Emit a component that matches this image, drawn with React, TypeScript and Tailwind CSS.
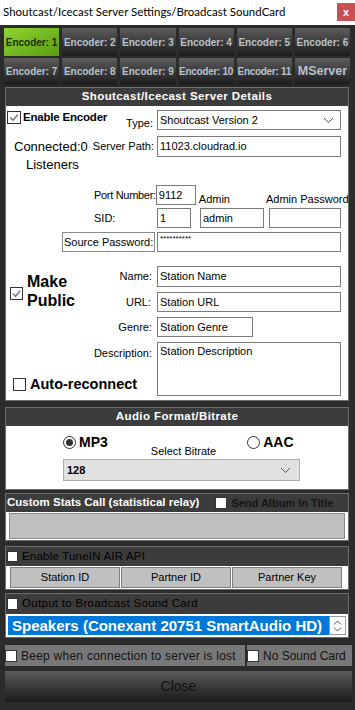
import React, { ReactNode } from 'react';

const Check = ({ checked = false, className = '' }: { checked?: boolean; className?: string }) => (
  <div className={`bg-white border border-[#333] flex items-center justify-center shrink-0 ${className}`}>
    {checked && (
      <svg viewBox="0 0 12 12" className="w-full h-full">
        <polyline points="2,6 5,9 10,3" fill="none" stroke="#6b6b6b" strokeWidth="1.3" />
      </svg>
    )}
  </div>
);

const Radio = ({ checked = false }: { checked?: boolean }) => (
  <div className="w-[13px] h-[13px] rounded-full border border-[#333] bg-white flex items-center justify-center shrink-0">
    {checked && <div className="w-[7px] h-[7px] rounded-full bg-[#333]" />}
  </div>
);

const Chevron = () => (
  <svg width="11" height="7" viewBox="0 0 11 7">
    <polyline points="1,1 5.5,5.5 10,1" fill="none" stroke="#555" strokeWidth="1" />
  </svg>
);

const Field = ({ value = '', className = '' }: { value?: string; className?: string }) => (
  <div className={`border border-[#7a7a7a] bg-white text-[11px] text-black leading-[18px] pl-[2px] shrink-0 overflow-hidden whitespace-nowrap ${className}`}>
    {value}
  </div>
);

const Label = ({ children, className = '' }: { children: ReactNode; className?: string }) => (
  <div className={`text-[11px] text-black whitespace-nowrap ${className}`}>{children}</div>
);

interface SectionProps {
  title: ReactNode;
  children: ReactNode;
  headerClass?: string;
  className?: string;
}

const Section = ({ title, children, headerClass = 'h-[18px] justify-center', className = '' }: SectionProps) => (
  <div className={`w-[344px] border border-[#6e6e6e] ${className}`}>
    <div className={`bg-[#3c3c3c] flex items-center ${headerClass}`}>{title}</div>
    {children}
  </div>
);

const encoders = [
  'Encoder: 1', 'Encoder: 2', 'Encoder: 3', 'Encoder: 4', 'Encoder: 5', 'Encoder: 6',
  'Encoder: 7', 'Encoder: 8', 'Encoder: 9', 'Encoder: 10', 'Encoder: 11', 'MServer',
];

export default function App() {
  return (
    <div className="w-[355px] h-[710px] bg-[#2b2b2b] overflow-hidden font-['Liberation_Sans',Arial,sans-serif]">
      {/* Title bar */}
      <div className="h-[25px] bg-white flex items-start justify-between">
        <div className="pl-[3px] pt-[4px] text-[11.5px] text-black font-['Lato','Liberation_Sans',sans-serif] leading-[16px] whitespace-nowrap">
          Shoutcast/Icecast Server Settings/Broadcast SoundCard
        </div>
        <div className="mt-[3px] w-[18px] h-[18px] bg-[#c75050] text-white text-[11px] font-bold flex items-center justify-center leading-none">
          x
        </div>
      </div>

      <div className="pl-[5px] pt-[3px]">
        {/* Encoder tabs */}
        <div className="-ml-[1px] w-[346px] grid grid-cols-6 gap-x-[3px] gap-y-[2px]">
          {encoders.map((e, i) => (
            <div
              key={e}
              className={`${i < 6 ? 'h-[28px]' : 'h-[27px]'} flex items-center justify-center font-bold whitespace-nowrap ${
                i === 0
                  ? 'bg-gradient-to-br from-[#8fd430] to-[#5b9d12] text-[#1d2a0a]'
                  : 'bg-gradient-to-b from-[#5d5d5d] via-[#3b3b3b] to-[#1d1d1d] text-[#b7c2cb]'
              } ${i === 11 ? 'text-[12.5px]' : i > 8 ? 'text-[10px] tracking-[-0.3px]' : 'text-[10px]'}`}
            >
              {e}
            </div>
          ))}
        </div>

        {/* Server details */}
        <Section
          className="mt-[2px]"
          title={<span className="text-white font-bold text-[11.5px] tracking-[0.4px]">Shoutcast/Icecast Server Details</span>}
        >
          <div className="bg-white h-[294px] pt-[4px]">
            {/* Type */}
            <div className="flex h-[20px]">
              <div className="w-[151px] flex justify-between">
                <div className="flex items-start pl-[1px] pt-[1px]">
                  <Check checked className="w-[14px] h-[13px]" />
                  <span className="ml-[2px] text-[11.5px] font-bold text-black leading-[12px] tracking-[-0.2px]">Enable Encoder</span>
                </div>
                <Label className="self-end pr-[4px] leading-[14px]">Type:</Label>
              </div>
              <div className="w-[184px] h-[20px] border border-[#7a7a7a] flex items-center justify-between pl-[2px] pr-[6px]">
                <span className="text-[11px] text-black">Shoutcast Version 2</span>
                <Chevron />
              </div>
            </div>

            {/* Server path */}
            <div className="flex h-[21px] mt-[6px]">
              <div className="w-[151px] flex justify-between items-center">
                <span className="ml-[8px] text-[13px] text-black leading-[16px]">Connected:0</span>
                <Label className="pr-[3px]">Server Path:</Label>
              </div>
              <Field value="11023.cloudrad.io" className="w-[184px] h-[21px]" />
            </div>
            <div className="h-[16px] ml-[20px] text-[13px] text-black leading-[16px]">Listeners</div>

            {/* Port */}
            <div className="flex h-[20px] mt-[12px]">
              <div className="w-[151px] flex items-center">
                <Label className="ml-[88px] tracking-[-0.3px]">Port Number:</Label>
              </div>
              <Field value="9112" className="w-[40px] h-[20px]" />
              <Label className="self-end ml-[3px] leading-[12px] text-[#1b2a6e]">Admin</Label>
              <Label className="self-end ml-[36px] leading-[12px] text-[#1b2a6e]">Admin Password</Label>
            </div>

            {/* SID */}
            <div className="flex h-[20px] mt-[3px]">
              <div className="w-[151px] flex items-center">
                <Label className="ml-[88px]">SID:</Label>
              </div>
              <Field value="1" className="w-[34px] h-[20px]" />
              <Field value="admin" className="w-[64px] h-[20px] ml-[9px]" />
              <Field className="w-[72px] h-[20px] ml-[5px]" />
            </div>

            {/* Source password */}
            <div className="flex h-[20px] mt-[4px]">
              <div className="w-[151px] flex">
                <div className="ml-[56px] w-[93px] h-[20px] border border-[#8a8a8a] flex items-center pl-[1px]">
                  <Label>Source Password:</Label>
                </div>
              </div>
              <div className="w-[184px] h-[20px] border border-[#7a7a7a] pl-[2px] text-[8px] text-black leading-[12px]">
                **********
              </div>
            </div>

            {/* Public info */}
            <div className="grid grid-cols-[151px_auto] grid-rows-[21px_20px_20px_54px] gap-y-[5px] mt-[14px]">
              <div className="col-start-1 row-start-1 row-span-3 self-start mt-[6px] flex items-center">
                <Check checked className="ml-[4px] w-[13px] h-[13px] mt-[4px]" />
                <div className="ml-[4px] text-[16px] font-bold text-black leading-[19px]">
                  Make
                  <br />
                  Public
                </div>
              </div>
              <Label className="col-start-1 row-start-1 justify-self-end self-center pr-[5px]">Name:</Label>
              <Field value="Station Name" className="col-start-2 row-start-1 w-[184px] h-[21px]" />
              <Label className="col-start-1 row-start-2 justify-self-end self-center pr-[6px]">URL:</Label>
              <Field value="Station URL" className="col-start-2 row-start-2 w-[184px] h-[20px]" />
              <Label className="col-start-1 row-start-3 justify-self-end self-center pr-[5px]">Genre:</Label>
              <Field value="Station Genre" className="col-start-2 row-start-3 w-[96px] h-[20px]" />
              <Label className="col-start-1 row-start-4 justify-self-end self-start pr-[5px] mt-[3px]">Description:</Label>
              <div className="col-start-1 row-start-4 self-end mb-[4px] flex items-center">
                <Check className="ml-[7px] w-[13px] h-[13px]" />
                <span className="ml-[4px] text-[14.5px] font-bold text-black leading-[15px]">Auto-reconnect</span>
              </div>
              <div className="col-start-2 row-start-4 w-[184px] h-[54px] border border-[#7a7a7a] pl-[2px] pt-[1px] text-[11px] text-black leading-[14px]">
                Station Description
              </div>
            </div>
          </div>
        </Section>

        {/* Audio format */}
        <Section
          className="mt-[6px]"
          title={<span className="text-white font-bold text-[11.5px] tracking-[0.4px]">Audio Format/Bitrate</span>}
        >
          <div className="bg-white h-[63px] pt-[10px]">
            <div className="flex items-start h-[13px] ml-[57px]">
              <div className="flex items-center">
                <Radio checked />
                <span className="ml-[3px] text-[14px] font-bold text-black leading-[13px]">MP3</span>
              </div>
              <span className="ml-[43px] mt-[9px] text-[11px] text-black leading-[13px]">Select Bitrate</span>
              <div className="flex items-center ml-[31px]">
                <Radio />
                <span className="ml-[3px] text-[14px] font-bold text-black leading-[13px]">AAC</span>
              </div>
            </div>
            <div className="ml-[57px] mt-[10px] w-[237px] h-[22px] bg-[#e1e1e1] border border-[#adadad] flex items-center justify-between pl-[3px] pr-[8px]">
              <span className="text-[11px] font-bold text-black">128</span>
              <Chevron />
            </div>
          </div>
        </Section>

        {/* Custom stats */}
        <Section
          className="mt-[3px]"
          headerClass="h-[18px]"
          title={
            <>
              <span className="pl-[1px] text-white font-bold text-[11.5px] whitespace-nowrap">
                Custom Stats Call (statistical relay)
              </span>
              <Check className="ml-[16px] w-[12px] h-[12px] border-[#2b2b2b]" />
              <span className="ml-[4px] text-[11px] font-bold text-[#151515] whitespace-nowrap">Send Album in Title</span>
            </>
          }
        >
          <div className="bg-white h-[28px] px-[3px] py-[1px]">
            <div className="h-[26px] bg-[#c0c0c0] border border-[#8a8a8a]" />
          </div>
        </Section>

        {/* TuneIn */}
        <Section
          className="mt-[5px]"
          headerClass="h-[19px]"
          title={
            <>
              <Check className="ml-[1px] w-[11px] h-[11px] border-[#2b2b2b]" />
              <span className="ml-[4px] text-[11.5px] text-black whitespace-nowrap tracking-[0.2px]">Enable TuneIN AIR API</span>
            </>
          }
        >
          <div className="bg-white h-[23px] pl-[4px] pt-[1px] flex gap-[1px]">
            {['Station ID', 'Partner ID', 'Partner Key'].map((t) => (
              <div
                key={t}
                className="w-[110px] h-[21px] bg-[#c0c0c0] border border-[#7f7f7f] flex items-center justify-center text-[11px] text-black"
              >
                {t}
              </div>
            ))}
          </div>
        </Section>

        {/* Broadcast sound card */}
        <Section
          className="mt-[3px]"
          headerClass="h-[20px]"
          title={
            <>
              <Check className="ml-[1px] w-[11px] h-[12px] border-[#2b2b2b]" />
              <span className="ml-[4px] text-[11.5px] text-black whitespace-nowrap tracking-[0.3px]">Output to Broadcast Sound Card</span>
            </>
          }
        >
          <div className="bg-white h-[23px] p-[2px] flex">
            <div className="w-[321px] h-[19px] bg-[#0078d7] flex items-center pl-[4px] text-white text-[15px] font-bold whitespace-nowrap overflow-hidden leading-[17px]">
              Speakers (Conexant 20751 SmartAudio HD)
            </div>
            <div className="w-[17px] h-[19px] border border-[#9a9a9a] bg-white flex flex-col items-center justify-center gap-[2px]">
              <svg width="9" height="5" viewBox="0 0 9 5">
                <polyline points="1,4.5 4.5,1 8,4.5" fill="none" stroke="#555" strokeWidth="1" />
              </svg>
              <svg width="9" height="5" viewBox="0 0 9 5">
                <polyline points="1,0.5 4.5,4 8,0.5" fill="none" stroke="#555" strokeWidth="1" />
              </svg>
            </div>
          </div>
        </Section>

        {/* Options */}
        <div className="flex gap-[2px] mt-[7px] h-[21px]">
          <div className="w-[240px] bg-[#787878] flex items-center">
            <Check className="w-[12px] h-[12px] border-[#2b2b2b]" />
            <span className="ml-[4px] text-[12px] text-[#111] whitespace-nowrap tracking-[0.25px]">Beep when connection to server is lost</span>
          </div>
          <div className="w-[105px] bg-[#787878] flex items-center">
            <Check className="w-[12px] h-[12px] border-[#2b2b2b]" />
            <span className="ml-[4px] text-[12px] text-[#111] whitespace-nowrap">No Sound Card</span>
          </div>
        </div>

        <div className="mt-[5px] w-[347px] h-[31px] bg-gradient-to-b from-[#5a5a5a] via-[#3a3a3a] to-[#1b1b1b] flex items-center justify-center text-[14px] text-[#111]">
          Close
        </div>
      </div>
    </div>
  );
}
